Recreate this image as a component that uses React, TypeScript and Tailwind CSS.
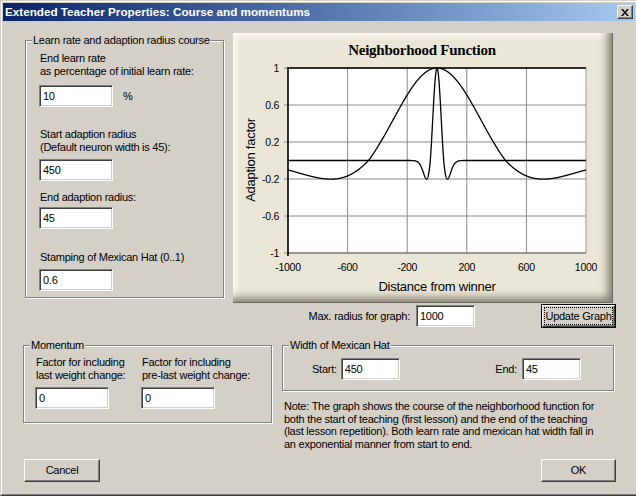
import React from 'react';

const cn = (...c: (string | false | undefined)[]) => c.filter(Boolean).join(' ');

interface GroupBoxProps {
  legend: string;
  className?: string;
  children?: React.ReactNode;
}

const GroupBox: React.FC<GroupBoxProps> = ({ legend, className, children }) => (
  <div
    className={cn(
      'relative border border-[#808080] shadow-[inset_1px_1px_0_#fff,1px_1px_0_#fff]',
      className
    )}
  >
    <span className="absolute left-[6px] -top-[7px] bg-[#d4d0c8] px-[1px] leading-[13px] whitespace-nowrap">
      {legend}
    </span>
    {children}
  </div>
);

const Field: React.FC<{ value: string; className?: string }> = ({ value, className }) => (
  <div
    className={cn(
      'flex items-center bg-white border border-t-[#808080] border-l-[#808080] border-b-white border-r-white shadow-[inset_1px_1px_0_#404040,inset_-1px_-1px_0_#d4d0c8] pl-[3px] h-[22px]',
      className
    )}
  >
    {value}
  </div>
);

const RaisedButton: React.FC<{ label: string; className?: string }> = ({ label, className }) => (
  <div
    className={cn(
      'flex items-center justify-center border border-t-white border-l-white border-b-[#404040] border-r-[#404040] shadow-[inset_-1px_-1px_0_#808080]',
      className
    )}
  >
    {label}
  </div>
);

// chart geometry, relative to the cream frame
const PL = 55;
const PR = 353;
const PT = 35;
const PB = 220;
const sx = (d: number) => PL + ((d + 1000) / 2000) * (PR - PL);
const sy = (v: number) => PT + ((1 - v) / 2) * (PB - PT);

const hat = (d: number, w: number) => {
  const x2 = (d / w) ** 2;
  const v = (1 - x2) * Math.exp(-0.714 * x2);
  return v < 0 ? v * 0.8 : v;
};

const curve = (w: number) => {
  let s = '';
  for (let d = -1000; d <= 1000; d += 1) {
    s += (d === -1000 ? 'M' : 'L') + sx(d).toFixed(2) + ',' + sy(hat(d, w)).toFixed(2);
  }
  return s;
};

const NeighborhoodChart: React.FC = () => {
  const xTicks = [-1000, -600, -200, 200, 600, 1000];
  const yTicks = [1, 0.6, 0.2, -0.2, -0.6, -1];
  return (
    <svg width={380} height={270} className="block">
      <text
        x={189}
        y={22}
        textAnchor="middle"
        fontFamily="'Liberation Serif', serif"
        fontWeight="bold"
        fontSize={15}
      >
        Neighborhood Function
      </text>
      <rect x={PL} y={PT} width={PR - PL} height={PB - PT} fill="#fff" />
      {xTicks.slice(1, -1).map((t) => (
        <line key={t} x1={sx(t)} x2={sx(t)} y1={PT} y2={PB} stroke="#8a8a8a" strokeWidth={1} />
      ))}
      {yTicks.map((t) => (
        <line key={t} x1={PL - 4} x2={PR} y1={sy(t)} y2={sy(t)} stroke="#8a8a8a" strokeWidth={1} />
      ))}
      <line x1={PR} x2={PR} y1={PT} y2={PB} stroke="#9a9a9a" strokeWidth={1} />
      <line x1={PL} x2={PR} y1={PB} y2={PB} stroke="#707070" strokeWidth={1} />
      <line x1={PL} x2={PL} y1={PT - 1} y2={PB + 3} stroke="#000" strokeWidth={1.6} />
      <line x1={PL} x2={PR} y1={PT} y2={PT} stroke="#000" strokeWidth={1.6} />
      <path d={curve(460)} fill="none" stroke="#000" strokeWidth={1.3} />
      <path d={curve(45)} fill="none" stroke="#000" strokeWidth={1.3} />
      <g fontFamily="'Liberation Sans', Arial, sans-serif" fontSize={10.5} fill="#000">
        {yTicks.map((t) => (
          <text key={t} x={46} y={sy(t)} dy="0.36em" textAnchor="end">
            {t}
          </text>
        ))}
        {xTicks.map((t) => (
          <text key={t} x={sx(t)} y={238} textAnchor="middle">
            {t}
          </text>
        ))}
      </g>
      <g fontFamily="'Liberation Sans', Arial, sans-serif" fontSize={13} fill="#000">
        <text x={204} y={257.5} textAnchor="middle">
          Distance from winner
        </text>
        <text x={17} y={127} dy="0.36em" textAnchor="middle" transform="rotate(-90 17 127)">
          Adaption factor
        </text>
      </g>
    </svg>
  );
};

export default function App() {
  return (
    <div className="w-[636px] h-[496px] bg-[#d4d0c8] border-t border-l border-b border-t-[#d4d0c8] border-l-[#d4d0c8] border-b-[#404040] text-black font-['Liberation_Sans',Arial,sans-serif] text-[11px] leading-[13px] tracking-[-0.25px] overflow-hidden">
      <div className="h-full border-t border-l border-b border-t-white border-l-white border-b-[#808080] p-[1px] flex flex-col">
        {/* Title bar */}
        <div className="h-[18px] flex items-center bg-linear-to-r from-[#0a246a] to-[#a6caf0] pl-[2px] pr-[2px]">
          <span className="text-white font-bold text-[11.7px] tracking-normal leading-[18px] whitespace-nowrap">
            Extended Teacher Properties: Course and momentums
          </span>
          <div className="ml-auto w-[16px] h-[14px] flex items-center justify-center bg-[#d4d0c8] border border-t-white border-l-white border-b-[#404040] border-r-[#404040] shadow-[inset_-1px_-1px_0_#808080]">
            <svg width={8} height={7} viewBox="0 0 8 7">
              <path d="M0 0h2l2 2.5L6 0h2L5 3.5 8 7H6L4 4.5 2 7H0l3-3.5z" fill="#000" />
            </svg>
          </div>
        </div>

        {/* Body */}
        <div className="flex-1 flex flex-col">
          <div className="flex items-start">
            <GroupBox
              legend="Learn rate and adaption radius course"
              className="ml-[22px] mt-[19px] w-[199px] h-[258px] pl-[14px] pt-[11px]"
            >
              <p>End learn rate</p>
              <p>as percentage of initial learn rate:</p>
              <div className="flex items-center mt-[7px] -ml-[1px]">
                <Field value="10" className="w-[74px]" />
                <span className="ml-[10px]">%</span>
              </div>
              <p className="mt-[21px]">Start adaption radius</p>
              <p>(Default neuron width is 45):</p>
              <Field value="450" className="w-[74px] mt-[5px] -ml-[1px]" />
              <p className="mt-[10px]">End adaption radius:</p>
              <Field value="45" className="w-[74px] mt-[3px] -ml-[1px]" />
              <p className="mt-[22px]">Stamping of Mexican Hat (0..1)</p>
              <Field value="0.6" className="w-[74px] mt-[5px] -ml-[1px]" />
            </GroupBox>

            <div className="ml-[9px] mt-[12px] w-[380px] h-[270px] bg-[#ebe7d8] border-r border-b border-r-[#6e6b62] border-b-[#6e6b62] shadow-[inset_-10px_-10px_9px_-6px_rgba(90,85,70,0.75),inset_6px_6px_5px_-3px_rgba(255,255,255,0.75)]">
              <NeighborhoodChart />
            </div>
          </div>

          {/* Max radius row */}
          <div className="flex items-center justify-end pr-[19px] mt-[1px] h-[24px]">
            <span className="whitespace-nowrap">Max. radius for graph:</span>
            <Field value="1000" className="ml-[6px] w-[59px]" />
            <div className="ml-[66px] w-[75px] h-[24px] border border-black">
              <div className="h-full border border-t-white border-l-white border-b-[#404040] border-r-[#404040] shadow-[inset_-1px_-1px_0_#808080] p-[1px]">
                <div className="h-full border border-dotted border-black flex items-center justify-center overflow-hidden whitespace-nowrap">
                  Update Graph
                </div>
              </div>
            </div>
          </div>

          <div className="flex items-start mt-[17px]">
            <GroupBox legend="Momentum" className="ml-[20px] w-[249px] h-[78px] pl-[12px] pt-[10px]">
              <div className="flex">
                <div className="w-[106px]">
                  <p className="whitespace-nowrap">Factor for including</p>
                  <p className="whitespace-nowrap">last weight change:</p>
                  <Field value="0" className="w-[74px] mt-[5px] -ml-[1px]" />
                </div>
                <div>
                  <p className="whitespace-nowrap">Factor for including</p>
                  <p className="whitespace-nowrap">pre-last weight change:</p>
                  <Field value="0" className="w-[74px] mt-[5px] -ml-[1px]" />
                </div>
              </div>
            </GroupBox>

            <div className="ml-[10px] w-[332px]">
              <GroupBox legend="Width of Mexican Hat" className="h-[46px] pt-[12px] pl-[29px] pr-[32px]">
                <div className="flex items-center justify-between">
                  <div className="flex items-center">
                    <span>Start:</span>
                    <Field value="450" className="ml-[4px] w-[59px]" />
                  </div>
                  <div className="flex items-center">
                    <span>End:</span>
                    <Field value="45" className="ml-[5px] w-[59px]" />
                  </div>
                </div>
              </GroupBox>
              <p className="mt-[9px] ml-[2px] leading-[12.7px] whitespace-nowrap">
                Note: The graph shows the course of the neighborhood function for
                <br />
                both the start of teaching (first lesson) and the end of the teaching
                <br />
                (last lesson repetition). Both learn rate and mexican hat width fall in
                <br />
                an exponential manner from start to end.
              </p>
            </div>
          </div>

          <div className="mt-auto mb-[11px] flex items-center justify-between pl-[21px] pr-[19px]">
            <RaisedButton label="Cancel" className="w-[76px] h-[23px]" />
            <RaisedButton label="OK" className="w-[75px] h-[23px]" />
          </div>
        </div>
      </div>
    </div>
  );
}
